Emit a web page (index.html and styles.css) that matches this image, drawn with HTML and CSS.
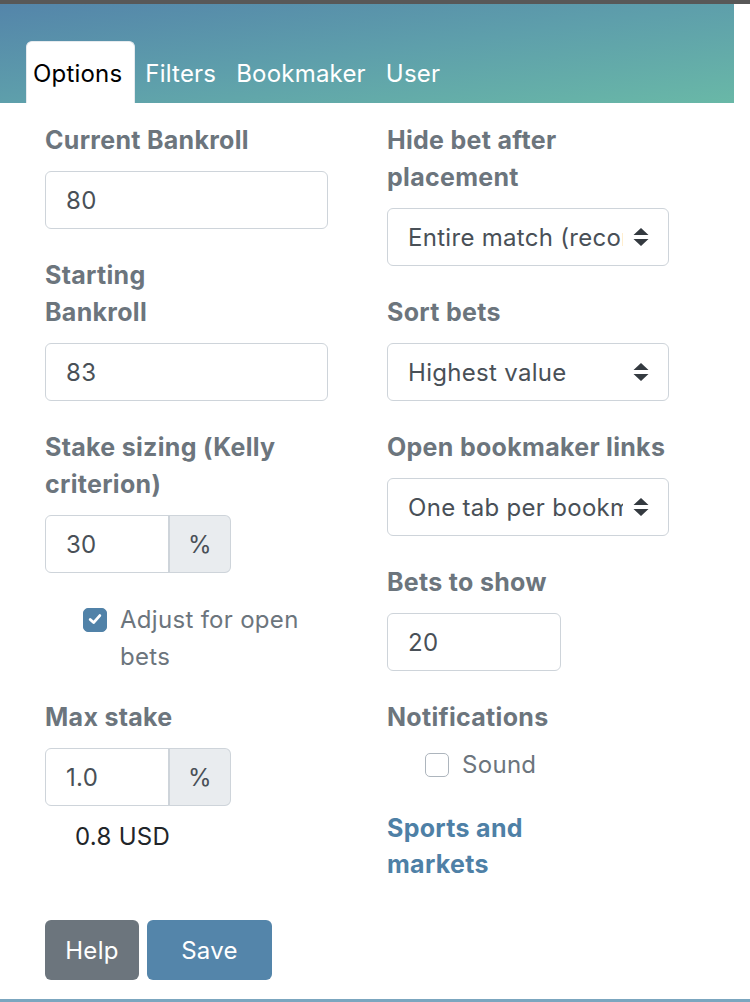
FILE: index.html
```html
<!DOCTYPE html>
<html lang="en">
<head>
<meta charset="utf-8">
<title>Options</title>
<link rel="stylesheet" href="styles.css">
</head>
<body>
<div class="topbar"></div>
<header class="header">
  <nav class="tabs">
    <a class="tab active">Options</a>
    <a class="tab">Filters</a>
    <a class="tab">Bookmaker</a>
    <a class="tab">User</a>
  </nav>
</header>
<main class="content">
  <div class="grid">
    <div class="col">
      <div class="field">
        <label class="label">Current Bankroll</label>
        <input class="input" type="text" value="80">
      </div>
      <div class="field">
        <label class="label">Starting<br>Bankroll</label>
        <input class="input" type="text" value="83">
      </div>
      <div class="field">
        <label class="label">Stake sizing (Kelly criterion)</label>
        <div class="input-group">
          <input class="input group-input" type="text" value="30">
          <span class="addon">%</span>
        </div>
      </div>
      <div class="check check-tight">
        <span class="box checked">
          <svg viewBox="0 0 24 24" width="24" height="24"><path d="M7.2 12.4 L10.6 15.6 L16.8 8.6" fill="none" stroke="#fff" stroke-width="2.8" stroke-linecap="round" stroke-linejoin="round"/></svg>
        </span>
        <span class="check-text">Adjust for open bets</span>
      </div>
      <div class="field field-last">
        <label class="label">Max stake</label>
        <div class="input-group">
          <input class="input group-input" type="text" value="1.0">
          <span class="addon">%</span>
        </div>
        <div class="note">0.8 USD</div>
      </div>
    </div>
    <div class="col">
      <div class="field">
        <label class="label">Hide bet after placement</label>
        <div class="select">
          <span class="select-text">Entire match (recommended)</span>
          <svg class="arrows" viewBox="0 0 16 20" width="16" height="20"><path d="M8 1 L15.5 8 L0.5 8 Z M8 19 L15.5 12 L0.5 12 Z" fill="#343a40"/></svg>
        </div>
      </div>
      <div class="field">
        <label class="label">Sort bets</label>
        <div class="select">
          <span class="select-text">Highest value</span>
          <svg class="arrows" viewBox="0 0 16 20" width="16" height="20"><path d="M8 1 L15.5 8 L0.5 8 Z M8 19 L15.5 12 L0.5 12 Z" fill="#343a40"/></svg>
        </div>
      </div>
      <div class="field">
        <label class="label">Open bookmaker links</label>
        <div class="select">
          <span class="select-text">One tab per bookmaker</span>
          <svg class="arrows" viewBox="0 0 16 20" width="16" height="20"><path d="M8 1 L15.5 8 L0.5 8 Z M8 19 L15.5 12 L0.5 12 Z" fill="#343a40"/></svg>
        </div>
      </div>
      <div class="field">
        <label class="label">Bets to show</label>
        <input class="input input-short" type="text" value="20">
      </div>
      <div class="field field-notif">
        <label class="label label-notif">Notifications</label>
        <div class="check">
          <span class="box"></span>
          <span class="check-text">Sound</span>
        </div>
      </div>
      <a class="link">Sports and<br>markets</a>
    </div>
  </div>
  <div class="buttons">
    <button class="btn btn-help">Help</button>
    <button class="btn btn-save">Save</button>
  </div>
</main>
<div class="bottomline"></div>
</body>
</html>
```

FILE: styles.css
```css
* { box-sizing: border-box; }

html, body {
  margin: 0;
  padding: 0;
  background: #fff;
}

body {
  width: 750px;
  height: 1002px;
  position: relative;
  overflow: hidden;
  font-family: Inter, "Liberation Sans", Arial, sans-serif;
  font-size: 24px;
  line-height: 37px;
  letter-spacing: 0.3px;
  color: #212529;
}

.topbar {
  height: 4px;
  background: #585858;
}

.header {
  width: 734px;
  height: 99px;
  background: linear-gradient(to bottom right, #5485aa 0%, #5e9fab 50%, #69b8a7 100%);
  padding: 37px 0 0 26px;
}

.tabs {
  display: flex;
  height: 62px;
  align-items: stretch;
}

.tab {
  display: block;
  padding: 14px 10px 11px;
  line-height: 37px;
  color: #fff;
  font-size: 24px;
  letter-spacing: 0.2px;
  border-radius: 6px 6px 0 0;
}

.tab.active {
  background: #fff;
  color: #000;
  border: 1px solid #e6eaee;
  border-bottom: none;
  padding: 13px 12px 11px 6px;
}

.content {
  padding: 19px 0 0 45px;
}

.grid {
  display: grid;
  grid-template-columns: 283px 282px;
  column-gap: 59px;
}

.col {
  display: flex;
  flex-direction: column;
}

.field {
  display: flex;
  flex-direction: column;
  margin-bottom: 28px;
}

.field-last { margin-bottom: 0; }

.field-notif { margin-bottom: 27px; }

.label {
  display: block;
  font-weight: 700;
  font-size: 25px;
  letter-spacing: 0.3px;
  color: #6c757d;
  margin-bottom: 12px;
}

.label-notif { margin-bottom: 10px; }

.input {
  display: block;
  width: 100%;
  height: 58px;
  border: 1px solid #ced4da;
  border-radius: 6px;
  padding: 0 20px;
  font-family: inherit;
  font-size: 24px;
  letter-spacing: 0.3px;
  color: #495057;
  background: #fff;
  outline: none;
}

.input-short { width: 174px; }

.input-group {
  display: flex;
  height: 58px;
}

.group-input {
  width: 124px;
  border-radius: 6px 0 0 6px;
}

.addon {
  width: 63px;
  display: flex;
  align-items: center;
  justify-content: center;
  background: #e9ecef;
  border: 1px solid #ced4da;
  border-left: 2px solid #ced4da;
  margin-left: -1px;
  border-radius: 0 6px 6px 0;
  color: #495057;
}

.select {
  display: flex;
  align-items: center;
  height: 58px;
  border: 1px solid #ced4da;
  border-radius: 6px;
  padding: 0 19px 0 20px;
  color: #495057;
  background: #fff;
}

.select-text {
  flex: 1;
  overflow: hidden;
  white-space: nowrap;
  margin-right: 10px;
}

.arrows { flex: none; }

.check {
  display: flex;
  align-items: flex-start;
  padding-left: 38px;
  color: #6c757d;
}

.check-tight { margin-bottom: 24px; }

.box {
  flex: none;
  width: 24px;
  height: 24px;
  margin-top: 6.5px;
  margin-right: 13px;
  border-radius: 5px;
  border: 1.5px solid #adb5bd;
  background: #fff;
  display: flex;
}

.box.checked {
  background: #5182a8;
  border-color: #5182a8;
}

.box.checked svg {
  margin: -1.5px;
}

.note {
  margin-top: 12px;
  padding-left: 30px;
  color: #212529;
}

.link {
  color: #4e80a6;
  font-weight: 700;
  font-size: 25px;
  line-height: 36px;
}

.buttons {
  display: flex;
  gap: 8px;
  margin-top: 38px;
}

.btn {
  height: 60px;
  border: none;
  border-radius: 6px;
  font-family: inherit;
  font-size: 24px;
  letter-spacing: 0.3px;
  color: #fff;
  padding: 0;
}

.btn-help {
  width: 94px;
  background: #6c757d;
}

.btn-save {
  width: 125px;
  background: #5485aa;
}

.bottomline {
  position: absolute;
  left: 0;
  right: 0;
  bottom: 0;
  height: 3px;
  background: #7ba6bf;
}
```
